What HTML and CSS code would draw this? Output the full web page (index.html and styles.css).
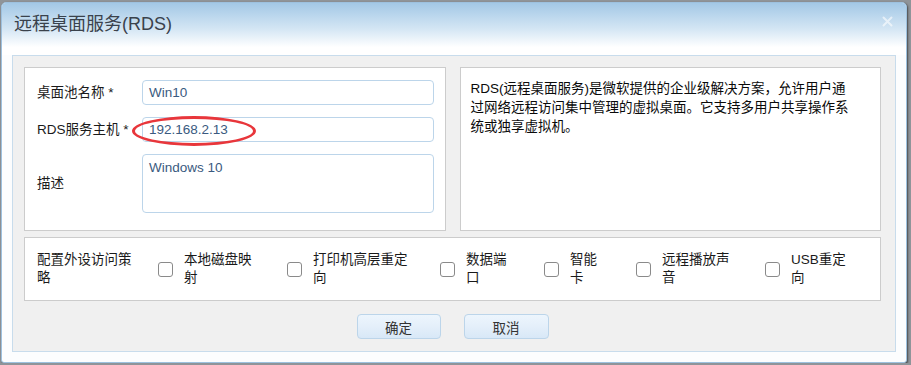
FILE: index.html
```html
<!DOCTYPE html>
<html lang="zh-CN">
<head>
    <meta charset="UTF-8">
    <title>远程桌面服务(RDS)</title>
    <link rel="stylesheet" href="styles.css">
</head>
<body>
    <div class="dialog">
        <div class="titlebar">
            <span class="title">远程桌面服务(RDS)</span>
            <svg class="close" width="11" height="11" viewBox="0 0 11 11">
                <path d="M1.5 1.5 L9.5 9.5 M9.5 1.5 L1.5 9.5" stroke="#ffffff" stroke-width="2" stroke-linecap="round"/>
            </svg>
        </div>
        <div class="panel">
            <div class="top-row">
                <div class="box form-box">
                    <div class="row">
                        <label class="label">桌面池名称 *</label>
                        <div class="input">Win10</div>
                    </div>
                    <div class="row">
                        <label class="label">RDS服务主机 *</label>
                        <div class="input">192.168.2.13</div>
                    </div>
                    <div class="row">
                        <label class="label">描述</label>
                        <div class="input textarea">Windows 10</div>
                    </div>
                    <div class="mark"></div>
                </div>
                <div class="box info-box">
                    <p class="info">RDS(远程桌面服务)是微软提供的企业级解决方案，允许用户通过网络远程访问集中管理的虚拟桌面。它支持多用户共享操作系统或独享虚拟机。</p>
                </div>
            </div>
            <div class="box policy-box">
                <div class="policy-label">配置外设访问策略</div>
                <div class="opt opt-disk"><span class="check"></span><span class="opt-text">本地磁盘映射</span></div>
                <div class="opt opt-print"><span class="check"></span><span class="opt-text">打印机高层重定向</span></div>
                <div class="opt opt-port"><span class="check"></span><span class="opt-text">数据端口</span></div>
                <div class="opt opt-card"><span class="check"></span><span class="opt-text">智能卡</span></div>
                <div class="opt opt-audio"><span class="check"></span><span class="opt-text">远程播放声音</span></div>
                <div class="opt opt-usb"><span class="check"></span><span class="opt-text">USB重定向</span></div>
            </div>
            <div class="buttons">
                <button class="btn btn-ok">确定</button>
                <button class="btn btn-cancel">取消</button>
            </div>
        </div>
    </div>
</body>
</html>
```

FILE: styles.css
```css
body {
    margin: 0;
    padding: 0;
    background-color: #8f9499;
    font-family: "Liberation Sans", "Noto Sans CJK SC", sans-serif;
    font-size: 13.5px;
    color: #222;
}

.dialog {
    box-sizing: border-box;
    width: 906px;
    height: 361px;
    margin: 2px 0 0 1px;
    border: 1px solid #9dc1df;
    border-radius: 5px 5px 3px 3px;
    background-color: #fcfdfe;
    box-shadow: 1px 1px 2px rgba(0, 0, 0, 0.5);
}

.titlebar {
    position: relative;
    box-sizing: border-box;
    height: 52px;
    padding: 9px 0 0 12px;
    border-radius: 4px 4px 0 0;
    background: linear-gradient(to bottom, #a3c8e6 0%, #d4e6f4 50%, #ffffff 85%);
}

.title {
    font-size: 18px;
    line-height: 24px;
    color: #3a424c;
}

.close {
    position: absolute;
    right: 13px;
    top: 13px;
    opacity: 0.6;
}

.panel {
    box-sizing: border-box;
    height: 297px;
    margin: 0 10px;
    padding: 11px 14px 0 11px;
    border: 1px solid #c8dcec;
    background-color: #f0f0f0;
}

.top-row {
    display: flex;
    gap: 14px;
}

.box {
    box-sizing: border-box;
    border: 1px solid #cccccc;
    background-color: #ffffff;
}

.form-box {
    position: relative;
    width: 422px;
    height: 164px;
    padding: 12px 0 0 12px;
    display: flex;
    flex-direction: column;
    gap: 12px;
}

.row {
    display: flex;
    align-items: center;
}

.label {
    width: 105px;
    line-height: 20px;
    color: #1a1a1a;
}

.input {
    box-sizing: border-box;
    width: 292px;
    height: 25px;
    padding: 0 6px;
    border: 1px solid #bcd5ea;
    border-radius: 4px;
    line-height: 23px;
    color: #3a5a80;
    background-color: #ffffff;
}

.textarea {
    height: 59px;
    padding-top: 1px;
}

.mark {
    position: absolute;
    left: 107px;
    top: 48px;
    width: 124px;
    height: 30px;
    box-sizing: border-box;
    border: 3px solid #e8363b;
    border-radius: 50%;
}

.info-box {
    width: 422px;
    height: 164px;
    padding: 11px 0 0 10px;
}

.info {
    width: 385px;
    margin: 0;
    line-height: 19px;
    color: #0a0a0a;
}

.policy-box {
    margin-top: 6px;
    height: 64px;
    padding-left: 12px;
    display: flex;
    align-items: center;
}

.policy-label {
    width: 100px;
    margin-right: 21px;
    line-height: 18px;
    color: #1a1a1a;
}

.opt {
    display: flex;
    align-items: center;
}

.check {
    box-sizing: border-box;
    flex: none;
    width: 15px;
    height: 15px;
    margin-right: 11px;
    border: 1.5px solid #8a8a8a;
    border-radius: 3px;
    background-color: #ffffff;
}

.opt-text {
    line-height: 18px;
    color: #1a1a1a;
}

.opt-disk { width: 129px; }
.opt-disk .opt-text { width: 75px; }
.opt-print { width: 153px; }
.opt-print .opt-text { width: 100px; }
.opt-port { width: 104px; }
.opt-port .opt-text { width: 50px; }
.opt-card { width: 92px; }
.opt-card .opt-text { width: 35px; }
.opt-audio { width: 129px; }
.opt-audio .opt-text { width: 75px; }
.opt-usb .opt-text { width: 60px; }

.buttons {
    margin-top: 13px;
    display: flex;
    justify-content: center;
    gap: 23px;
}

.btn {
    box-sizing: border-box;
    width: 84px;
    height: 25px;
    padding: 0;
    border: 1px solid #bcd5ea;
    border-radius: 4px;
    background: linear-gradient(to bottom, #edf5fd 0%, #e4effa 50%, #d8e8f7 100%);
    font-family: "Liberation Sans", "Noto Sans CJK SC", sans-serif;
    font-size: 13.5px;
    color: #333;
    cursor: pointer;
}

.btn-cancel {
    width: 85px;
}
```
